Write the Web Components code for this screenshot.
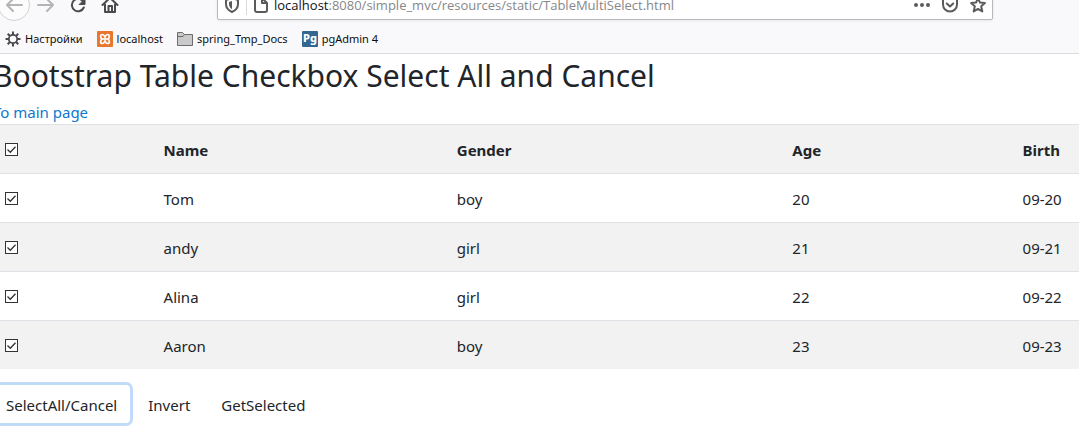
<!DOCTYPE html>
<html lang="en">
<head>
<meta charset="utf-8">
<title>Bootstrap Table Checkbox Select All and Cancel</title>
<style>
  body { margin: 0; display: flow-root; min-height: 100vh; background: #fff; color: #212529; font: 15px/24px "Noto Sans", "Open Sans", sans-serif; overflow: hidden; }
</style>
</head>
<body>
<browser-nav></browser-nav>
<bookmarks-bar>
  <bookmark-link icon="gear">Настройки</bookmark-link>
  <bookmark-link icon="xampp">localhost</bookmark-link>
  <bookmark-link icon="folder">spring_Tmp_Docs</bookmark-link>
  <bookmark-link icon="pg">pgAdmin 4</bookmark-link>
</bookmarks-bar>
<people-page></people-page>

<script>
class BrowserNav extends HTMLElement {
  constructor() {
    super();
    this.attachShadow({ mode: 'open' }).innerHTML = `
<style>
  :host { display: flex; align-items: center; height: 40px; margin-top: -15px; background: #f9f9fb; color: #4a4a4d; }
  button { border: 0; padding: 0; background: none; color: inherit; width: 32px; height: 32px; display: grid; place-items: center; flex: none; box-sizing: border-box; }
  .back { border: 1px solid #d3d3d5; border-radius: 50%; background: #fcfcfd; margin-left: -2px; }
  .dim { color: #b4b4b6; }
  svg { display: block; fill: none; stroke: currentColor; stroke-width: 2; stroke-linecap: round; stroke-linejoin: round; }
  .field { flex: 1; min-width: 0; height: 30px; box-sizing: border-box; margin: 0 86px 0 91px; border: 1px solid #b9b9bb; border-radius: 2px; background: #fff; box-shadow: 0 1px 3px rgba(0,0,0,.08); display: flex; align-items: center; color: #5b5b5d; }
  .id { display: flex; align-items: center; padding-left: 6px; gap: 6px; }
  .id i { width: 1px; height: 20px; background: #d9d9db; }
  .url { flex: 1; min-width: 0; font: 13px/20px "Open Sans", "Noto Sans", sans-serif; color: #87878a; padding-left: 5px; white-space: nowrap; }
  .url b { font-weight: 400; color: #101012; }
  .acts { display: flex; }
  .acts button { width: 28px; }
</style>
<button class="back dim" aria-label="Back"><svg width="18" height="18" viewBox="0 0 18 18"><path d="M17 9H2M8 3L2 9l6 6"/></svg></button>
<button class="dim" aria-label="Forward"><svg width="18" height="18" viewBox="0 0 18 18"><path d="M1 9h15M10 3l6 6-6 6"/></svg></button>
<button aria-label="Reload"><svg width="16" height="16" viewBox="0 0 16 16"><path d="M13 4.200A6.200 6.200 0 1 0 13.800 10.500"/><path d="M15 2v5.500H9.500z" fill="currentColor" stroke-width="1"/></svg></button>
<button aria-label="Home"><svg width="18" height="18" viewBox="0 0 18 18"><path d="M1.500 9L9 1.800 16.500 9M4 8.500V16h10V8.500"/><path d="M7.500 15v-5h3.500v5" /></svg></button>
<div class="field">
  <div class="id">
    <svg width="16" height="16" viewBox="0 0 16 16" role="img" aria-label="Tracking protection"><path d="M8 1l6 2v4c0 4-2.500 6.500-6 8-3.500-1.500-6-4-6-8V3z"/><path d="M8 4v8.200c-2-1.200-3-2.800-3-5.200V5z" fill="currentColor" stroke="none"/></svg>
    <i></i>
    <svg width="16" height="16" viewBox="0 0 16 16" role="img" aria-label="Page"><path d="M9 1H4a2 2 0 0 0-2 2v10a2 2 0 0 0 2 2h8a2 2 0 0 0 2-2V6zM9 1v5h5"/></svg>
  </div>
  <div class="url"><b>localhost</b>:8080/simple_mvc/resources/static/TableMultiSelect.html</div>
  <div class="acts">
    <button aria-label="Page actions"><svg width="16" height="16" viewBox="0 0 16 16"><g fill="currentColor" stroke="none"><circle cx="2" cy="8" r="2"/><circle cx="8" cy="8" r="2"/><circle cx="14" cy="8" r="2"/></g></svg></button>
    <button aria-label="Save to Pocket"><svg width="16" height="16" viewBox="0 0 16 16"><path d="M2.500 1.500h11a1.500 1.500 0 0 1 1.500 1.500v4.500a7 7 0 0 1-14 0V3a1.500 1.500 0 0 1 1.500-1.500zM4.800 6.500L8 9.500l3.200-3"/></svg></button>
    <button aria-label="Bookmark"><svg width="16" height="16" viewBox="0 0 16 16"><path d="M8 1.200l2 4.400 4.900.500-3.700 3.200 1.100 5.100L8 11.900l-4.300 2.500 1.100-5.100L1.100 6.100 6 5.600z"/></svg></button>
  </div>
</div>`;
  }
}

class BookmarksBar extends HTMLElement {
  constructor() {
    super();
    this.attachShadow({ mode: 'open' }).innerHTML = `
<style>
  :host { display: flex; align-items: center; gap: 14px; height: 28px; padding-left: 5px; background: #f9f9fb; border-bottom: 1px solid #dcdcde; }
</style><slot></slot>`;
  }
}

const icons = {
  gear: `<g fill="none" stroke="#4a4a4d"><circle cx="8" cy="8" r="4.200" stroke-width="1.800"/><path stroke-width="2" d="M8 .5V4M8 12v3.500M.5 8H4M12 8h3.500M2.700 2.700L5 5M11 11l2.300 2.300M13.300 2.700L11 5M5 11l-2.300 2.300"/></g>`,
  xampp: `<rect width="16" height="16" rx="1" fill="#e8762d"/><path d="M5.500 3.500C3 3.500 3 7 5.500 8 3 9 3 12.500 5.500 12.500 7 12.500 7.500 11 8 10c.5 1 1 2.500 2.500 2.500C13 12.500 13 9 10.500 8 13 7 13 3.500 10.500 3.500 9 3.500 8.500 5 8 6c-.5-1-1-2.500-2.500-2.500zM5.500 8h5" fill="none" stroke="#fff" stroke-width="1.700"/>`,
  folder: `<path d="M.5 14.500v-13h5l2 2h8v11z" fill="#c9c9c9" stroke="#6c6c6f"/><path d="M1 5.500h5l1.500-2" fill="none" stroke="#6c6c6f"/>`,
  pg: `<rect width="16" height="16" rx="1" fill="#336791"/><text x="8" y="11" text-anchor="middle" fill="#fff" font-family="Noto Sans, sans-serif" font-size="11" font-weight="800">Pg</text>`
};

class BookmarkLink extends HTMLElement {
  constructor() {
    super();
    this.attachShadow({ mode: 'open' }).innerHTML = `
<style>
  :host { display: block; }
  a { display: flex; align-items: center; gap: 4px; color: #0c0c0d; text-decoration: none; font: 11px/16px "Noto Sans", "Open Sans", sans-serif; white-space: nowrap; }
  svg { display: block; flex: none; }
</style>
<a href="#"><svg width="16" height="16" viewBox="0 0 16 16" aria-hidden="true">${icons[this.getAttribute('icon')]}</svg><span><slot></slot></span></a>`;
  }
}

class PeoplePage extends HTMLElement {
  constructor() {
    super();
    const rows = [['Tom', 'boy', '20', '09-20'], ['andy', 'girl', '21', '09-21'], ['Alina', 'girl', '22', '09-22'], ['Aaron', 'boy', '23', '09-23']];
    const root = this.attachShadow({ mode: 'open' });
    root.innerHTML = `
<style>
  :host { display: block; margin-left: -7px; }
  h2 { margin: 0 0 5px; padding-top: 3px; font-size: 30px; line-height: 38px; font-weight: 400; white-space: nowrap; }
  a { color: #0d78d0; text-decoration: none; display: block; width: max-content; }
  table { width: 100%; table-layout: fixed; border-collapse: separate; border-spacing: 0; margin-bottom: 16px; }
  th, td { padding: 13px 12px 11px; border-top: 1px solid #dee2e6; text-align: left; vertical-align: top; height: 24px; }
  th { font-weight: 700; }
  thead th, tbody tr:nth-child(even) td { background: #f2f2f2; }
  th:first-child, td:first-child { padding-top: 18px; padding-bottom: 6px; }
  input { appearance: none; display: block; width: 13px; height: 13px; margin: 0; border: 1px solid #333; background: #fff; }
  label { position: relative; display: block; width: 13px; height: 13px; }
  label svg { position: absolute; inset: 0; fill: none; stroke: #333; stroke-width: 1.300; pointer-events: none; display: none; }
  input:checked + svg { display: block; }
  .actions { display: flex; gap: 5px; }
  button { border: 1px solid transparent; border-radius: 4px; padding: 7px 12px 5px; background: transparent; color: inherit; font: inherit; }
  button.focus { box-shadow: 0 0 0 3px #c1dafa; }
</style>
<h2>Bootstrap Table Checkbox Select All and Cancel</h2>
<a href="#">To main page</a>
<table>
  <colgroup><col style="width:14.6%"><col style="width:27%"><col style="width:30.9%"><col style="width:21.2%"><col></colgroup>
  <thead><tr><th>${this.box('Select all')}</th><th>Name</th><th>Gender</th><th>Age</th><th>Birth</th></tr></thead>
  <tbody>${rows.map(r => `<tr><td>${this.box('Select ' + r[0])}</td>${r.map(c => `<td>${c}</td>`).join('')}</tr>`).join('')}</tbody>
</table>
<div class="actions"><button class="focus" id="all">SelectAll/Cancel</button><button id="invert">Invert</button><button id="get">GetSelected</button></div>`;
    const head = root.querySelector('thead input');
    const boxes = [...root.querySelectorAll('tbody input')];
    const sync = () => { head.checked = boxes.every(b => b.checked); };
    const setAll = on => { boxes.forEach(b => { b.checked = on; }); sync(); };
    head.addEventListener('change', () => setAll(head.checked));
    boxes.forEach(b => b.addEventListener('change', sync));
    root.getElementById('all').addEventListener('click', () => setAll(!head.checked));
    root.getElementById('invert').addEventListener('click', () => { boxes.forEach(b => { b.checked = !b.checked; }); sync(); });
    root.getElementById('get').addEventListener('click', () => {
      this.dispatchEvent(new CustomEvent('selected', { detail: rows.filter((r, i) => boxes[i].checked) }));
    });
  }
  box(name) {
    return `<label><input type="checkbox" checked aria-label="${name}"><svg width="13" height="13" viewBox="0 0 13 13" aria-hidden="true"><path d="M2.500 6.500l2.800 2.800 5.200-5.600"/></svg></label>`;
  }
}

customElements.define('browser-nav', BrowserNav);
customElements.define('bookmarks-bar', BookmarksBar);
customElements.define('bookmark-link', BookmarkLink);
customElements.define('people-page', PeoplePage);
</script>
</body>
</html>
